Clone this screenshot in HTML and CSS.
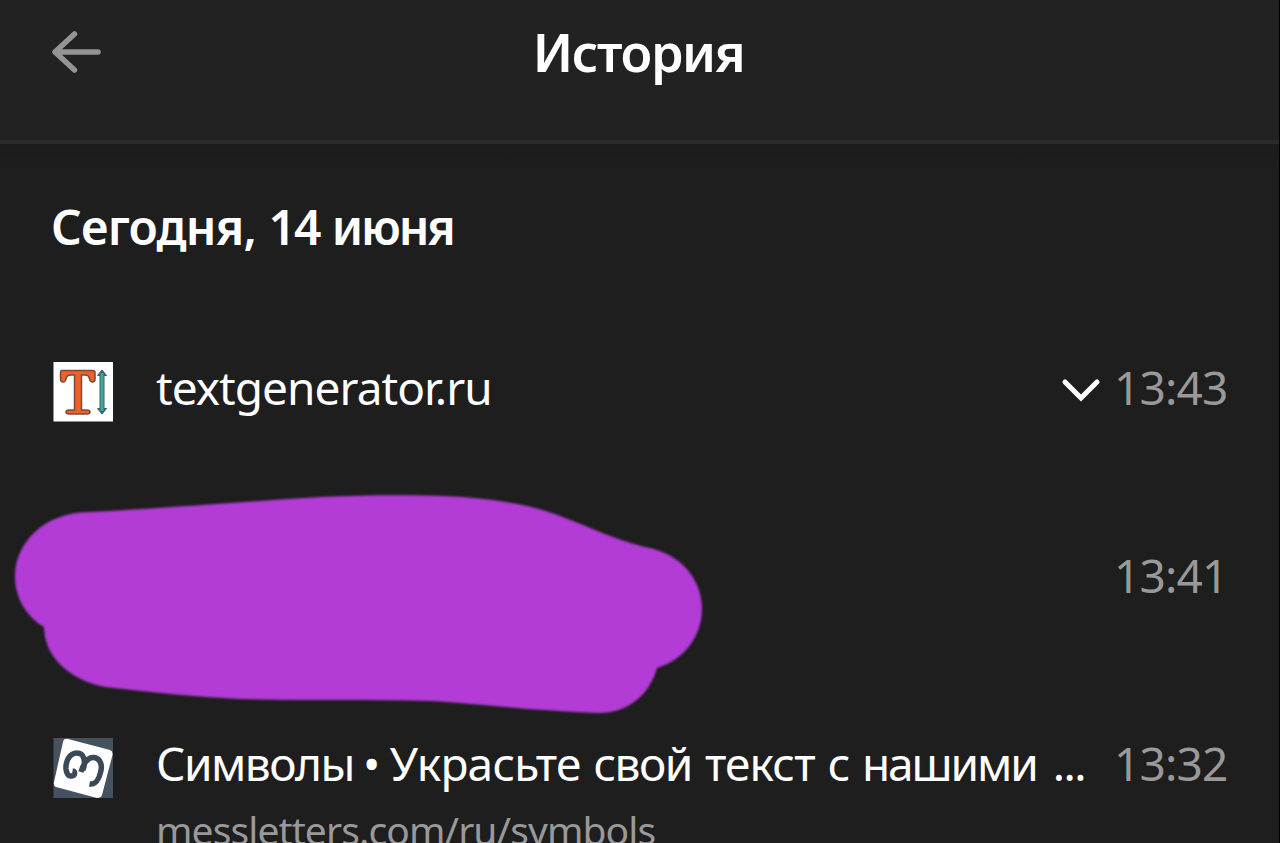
FILE: index.html
```html
<!DOCTYPE html>
<html lang="ru">
<head>
    <meta charset="UTF-8">
    <meta name="viewport" content="width=device-width, initial-scale=1.0">
    <title>История</title>
    <link rel="stylesheet" href="styles.css">
</head>
<body>
    <div class="app">
        <header class="header">
            <svg class="back" width="52" height="44" viewBox="0 0 52 44">
                <path d="M24.500 4 L5 22 L24.500 40 M6 22 H48" />
            </svg>
            <h1 class="title">История</h1>
        </header>

        <main class="history">
            <h2 class="day"><span class="day-name">Сегодня,</span> <span class="day-date">14 июня</span></h2>

            <ul class="list">
                <li class="item">
                    <svg class="favicon" width="60" height="60" viewBox="0 0 60 60">
                        <rect x="0.500" width="59.500" height="59.500" fill="#fff" />
                        <path d="M9 8.500 H40 Q42 8.500 42 11 V17 Q42 20 39.500 20 T36.500 17 Q36 13 32 13 H28.500 V48 H34 Q37 48 37 50 T34 52 H16 Q13 52 13 50 T16 48 H21.500 V13 H18 Q13.500 13 13 17 Q12.500 20 10 20 T7.500 17 V11 Q7.500 8.500 9 8.500 Z" fill="#ee6128" stroke="#7c4a3c" stroke-width="1.500" />
                        <path d="M49 13 V47" stroke="#35646a" stroke-width="5" />
                        <path d="M49 8 L53.500 13.500 H44.500 Z M49 52 L53.500 46.500 H44.500 Z" fill="#35646a" stroke="#35646a" stroke-width="1" stroke-linejoin="round" />
                        <path d="M49 11 V49" stroke="#45a79b" stroke-width="3" />
                    </svg>
                    <div class="info">
                        <div class="name site">textgenerator.ru</div>
                    </div>
                    <svg class="chevron" width="40" height="28" viewBox="0 0 40 28">
                        <path d="M4 5 L20 21 L36 5" />
                    </svg>
                    <time class="time">13:43</time>
                </li>
                <li class="item">
                    <div class="info"></div>
                    <time class="time">13:41</time>
                    <svg class="scribble" width="700" height="230" viewBox="10 490 700 230">
                        <path d="M90 512 C150 509 200 505 260 501 C310 497 360 494.500 425 495.500 C475 496 520 502 555 514 C590 527 622 543 654 549 C686 558 702 584 702 609 C702 636 684 660 657 668 C649 697 625 714 597 713 C540 711 480 704 430 701 C370 699 310 701 240 699 C195 697 150 692 105 687 C68 680 44 655 44 627 C27 617 15 599 15 576 C15 545 42 512 90 512 Z" />
                    </svg>
                </li>
                <li class="item">
                    <svg class="favicon" width="60" height="60" viewBox="0 0 60 60">
                        <rect x="0.500" width="59.500" height="60" fill="#46525f" />
                        <path d="M15 1 L57 12 Q60 13 59.500 17 L49 57 Q48 60 44 60 L3 49 Q0 48 1 44 L10 4 Q11 0 15 1 Z" fill="#fff" />
                        <path d="M30 32 C33 23 31 15 24 15 C16 15 12.500 24 13 31 C13.500 36 15.500 38.500 18.500 38 C22.500 37.500 22.500 33.500 19.500 33 M28 34 C31 24 35 19 41 19.500 C48 20.500 49.500 28 47.500 34.500 C46 41 42.500 47 36.500 46" fill="none" stroke="#3b4855" stroke-width="5.500" stroke-linejoin="round" />
                    </svg>
                    <div class="info">
                        <div class="name page">Символы <span class="bullet">•</span> <span class="wide">Украсьте</span> свой <span class="wide">текст</span> с <span class="narrow">нашими</span> ...</div>
                        <div class="url">messletters.com/ru/symbols</div>
                    </div>
                    <time class="time">13:32</time>
                </li>
            </ul>
        </main>
    </div>
</body>
</html>
```

FILE: styles.css
```css
* {
    box-sizing: border-box;
}

body {
    margin: 0;
    background: #000;
    font-family: "Noto Sans", sans-serif;
    color: #fff;
}

.app {
    width: 1279px;
    height: 843px;
    overflow: hidden;
    background: #1e1e1e;
}

.header {
    display: grid;
    grid-template-columns: 100px 1fr 100px;
    height: 144px;
    padding: 0 52px 0 50px;
    background: #222;
    border-bottom: 4px solid #2b2b2b;
}

.back {
    margin-top: 30px;
    fill: none;
    stroke: #949494;
    stroke-width: 5.5;
    stroke-linecap: round;
    stroke-linejoin: round;
}

.title {
    margin: 0;
    padding-top: 17px;
    font-size: 52px;
    line-height: 70px;
    font-weight: 600;
    letter-spacing: -1.4px;
    text-align: center;
    white-space: nowrap;
}

.history {
    background: linear-gradient(#1b1b1b, #1e1e1e 30px);
}

.day {
    margin: 0;
    padding: 53px 0 0 51px;
    height: 180px;
    font-size: 48px;
    line-height: 60px;
    font-weight: 600;
    white-space: nowrap;
}

.day-name {
    letter-spacing: -0.8px;
}

.day-date {
    letter-spacing: -2.1px;
    word-spacing: 2px;
}

.list {
    list-style: none;
    margin: 0;
    padding: 0;
}

.item {
    position: relative;
    display: flex;
    align-items: flex-start;
    height: 188px;
    padding: 33px 51px 0 53px;
}

.favicon {
    flex: none;
    margin: 5px 43px 0 0;
}

.info {
    flex: 1;
    min-width: 0;
}

.name {
    font-size: 46px;
    line-height: 60px;
    white-space: nowrap;
}

.site {
    letter-spacing: -0.95px;
}

.page {
    letter-spacing: -1.5px;
    word-spacing: 2.5px;
}

.bullet {
    margin: 0 -2px 0 -4px;
}

.wide {
    letter-spacing: -0.8px;
}

.narrow {
    margin-right: 3px;
    letter-spacing: -2.1px;
}

.url {
    margin-top: 9px;
    font-size: 39px;
    line-height: 56px;
    letter-spacing: -0.9px;
    color: #999;
    white-space: nowrap;
}

.chevron {
    flex: none;
    margin: 20px 13px 0 0;
    fill: none;
    stroke: #fff;
    stroke-width: 5;
    stroke-linecap: round;
}

.time {
    flex: none;
    width: 114px;
    font-size: 46px;
    line-height: 60px;
    letter-spacing: -0.8px;
    color: #999;
    white-space: nowrap;
}

/* marker drawn over the hidden entry */
.scribble {
    position: absolute;
    left: 10px;
    top: -22px;
    fill: #b23cd5;
    filter: blur(1px);
}
```
